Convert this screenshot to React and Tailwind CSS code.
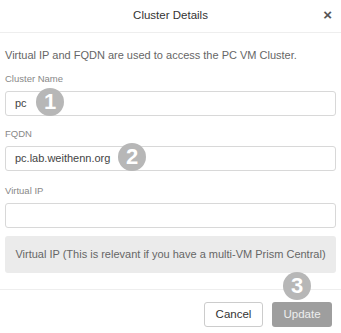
export default function App() {
  const font = { fontFamily: '"Liberation Sans", Arial, sans-serif' };
  return (
    <div className="relative w-[341px] h-[333px] bg-white overflow-hidden" style={font}>
      {/* Header */}
      <div className="relative h-[33px] border-b border-[#eeeeee] flex items-center justify-center">
        <span className="text-[11.5px] text-[#333333]">Cluster Details</span>
        <span className="absolute right-[9px] top-[7px] text-[15px] font-bold text-[#555555] leading-none">×</span>
      </div>

      {/* Body */}
      <div className="px-[5px] flex flex-col">
        <p className="mt-[14px] text-[11px] leading-[16px] text-[#666666]">
          Virtual IP and FQDN are used to access the PC VM Cluster.
        </p>

        <label className="mt-[9px] text-[9.5px] leading-[14px] text-[#888888]">Cluster Name</label>
        <div className="mt-[5px] h-[25px] border border-[#d8d8d8] rounded-[3px] flex items-center px-[9px] text-[11px] text-[#444444]">
          pc
        </div>

        <label className="mt-[11px] text-[9.5px] leading-[14px] text-[#888888]">FQDN</label>
        <div className="mt-[5px] h-[25px] border border-[#d8d8d8] rounded-[3px] flex items-center px-[9px] text-[11px] text-[#444444]">
          pc.lab.weithenn.org
        </div>

        <label className="mt-[13px] text-[9.5px] leading-[14px] text-[#888888]">Virtual IP</label>
        <div className="mt-[5px] h-[25px] border border-[#d8d8d8] rounded-[3px]" />

        <div className="mt-[8px] h-[37px] bg-[#ebebeb] rounded-[3px] flex items-center justify-center text-[11px] text-[#666666] whitespace-nowrap">
          Virtual IP (This is relevant if you have a multi-VM Prism Central)
        </div>
      </div>

      {/* Footer */}
      <div className="mt-[16px] border-t border-[#eeeeee] flex justify-end gap-[9px] pt-[12px] pr-[9px]">
        <button className="w-[59px] h-[25px] border border-[#cccccc] rounded-[3px] bg-white text-[11.5px] text-[#333333]">
          Cancel
        </button>
        <button className="w-[60px] h-[25px] rounded-[3px] bg-[#9e9e9e] text-[11.5px] text-[#eeeeee]">
          Update
        </button>
      </div>

      {/* Step badges */}
      <div className="absolute left-[36px] top-[88px] w-[28px] h-[28px] rounded-full bg-[#b7b7b7] flex items-center justify-center text-white text-[22px] font-semibold leading-none">1</div>
      <div className="absolute left-[118px] top-[143px] w-[28px] h-[28px] rounded-full bg-[#b7b7b7] flex items-center justify-center text-white text-[22px] font-semibold leading-none">2</div>
      <div className="absolute left-[283px] top-[272px] w-[28px] h-[28px] rounded-full bg-[#b7b7b7] flex items-center justify-center text-white text-[22px] font-semibold leading-none">3</div>
    </div>
  );
}
